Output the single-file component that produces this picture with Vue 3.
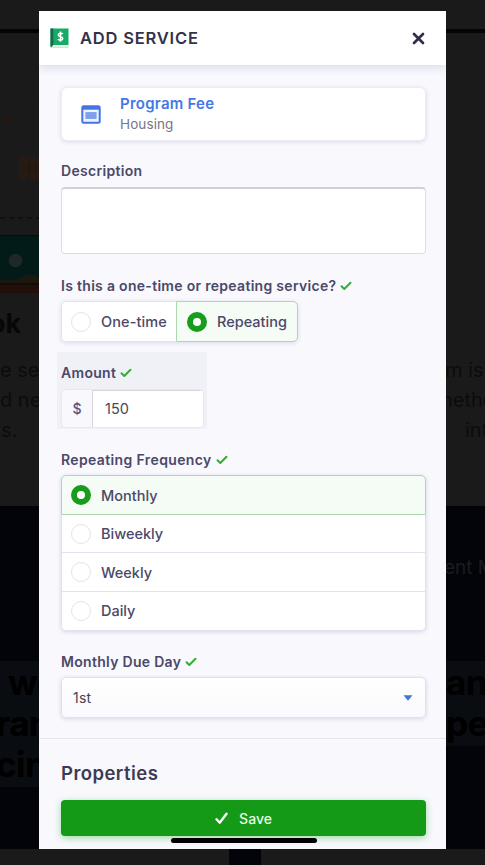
<script setup>
import { ref } from 'vue'

const kind = ref('Repeating')
const frequency = ref('Monthly')
const kinds = ['One-time', 'Repeating']
const frequencies = ['Monthly', 'Biweekly', 'Weekly', 'Daily']
</script>

<template>
  <div class="screen">
    <div class="page">
      <div class="topbar"></div>
      <div class="band intro">
        <div class="side left">
          <svg class="art" width="39" height="210" viewBox="0 0 39 210">
            <path d="M0 11H39" stroke="#1e1e1e" stroke-dasharray="4 4" />
            <path d="M7 29Q22 31 39 34" fill="none" stroke="#231a17" />
            <circle cx="7" cy="29" r="2.800" fill="#2c1612" />
            <rect x="19" y="67" width="20" height="23" fill="#261a12" />
            <path d="M20 78H39M29 67V90" stroke="#1e1610" />
            <path d="M0 128H39" stroke="#0e0e0e" stroke-width="1.5" stroke-dasharray="5 4" />
            <rect y="145" width="39" height="48" fill="#021a18" />
            <path d="M0 145.500H39" stroke="#080b0b" />
            <path d="M0 189Q12 192 22 187T39 187V193H0Z" fill="#1b190d" />
            <circle cx="15.500" cy="170.500" r="6.800" fill="#1c2928" />
            <rect y="195" width="39" height="8" fill="#230f09" />
            <rect y="193" width="39" height="2" fill="#120c08" />
          </svg>
          <div class="word">ok</div>
          <div class="copy"><span>e se</span><span>d ne</span><span class="end">s.</span></div>
        </div>
        <div class="side right">
          <div class="copy"><span>m is</span><span class="mid">hethe</span><span class="end">int</span></div>
        </div>
      </div>
      <div class="band dark">
        <div class="side left">
          <div class="big"><span class="first">we</span><span>ran</span><span>cin</span></div>
        </div>
        <div class="side right">
          <div class="menu">ent M</div>
          <div class="big two"><span>an</span><span>pe</span></div>
        </div>
      </div>
      <div class="tiles"><div></div><div></div></div>
    </div>

    <section class="modal">
      <header class="head">
        <svg class="book" width="19" height="21" viewBox="0 0 19 21">
          <path d="M.5 .5H18.500V17H2V18.500H18.500V19.300H.5Z" fill="#17aa67" />
          <path d="M2 17.100H18.500V19H2Z" fill="#e2f1eb" />
          <path d="M.5 .5H3.300V17L1.800 18.500H.5Z" fill="#17694c" />
          <path d="M12.700 6.100C12.100 4.900 8.400 4.900 8.300 7C8.300 9.200 12.800 8.100 12.800 10.500C12.700 12.700 8.700 12.600 8 11.200M10.500 3.500V13.800" fill="none" stroke="#fff" stroke-width="1.500" />
        </svg>
        <h1>ADD SERVICE</h1>
        <svg class="close" width="13" height="13" viewBox="0 0 13 13">
          <path d="M2 2L11 11M11 2L2 11" stroke="#302d4c" stroke-width="2.700" stroke-linecap="round" />
        </svg>
      </header>

      <div class="body">
        <div class="service">
          <svg width="20" height="19" viewBox="0 0 20 19">
            <rect x="1.300" y="1.300" width="17.400" height="16.400" rx="1.500" fill="#eef3ff" stroke="#4474e6" stroke-width="2" />
            <path d="M1 1.500H19V4.700H1Z" fill="#4474e6" />
            <path d="M4.500 7.500H15.500V13.500H4.500Z" fill="#8aabf2" />
            <path d="M4.500 8H15.500M4.500 10.500H15.500M4.500 13H15.500" stroke="#7299ee" stroke-width="1.400" />
          </svg>
          <div><strong>Program Fee</strong><span>Housing</span></div>
        </div>

        <label class="label description">Description</label>
        <div class="textarea"></div>

        <div class="label question">Is this a one-time or repeating service?
          <svg class="tick" viewBox="0 0 12 10"><path d="M1.500 5.200L4.300 8L10.500 1.800" /></svg>
        </div>
        <div class="segments">
          <div v-for="item in kinds" :key="item" class="option" :class="{ selected: kind === item }" @click="kind = item">
            <i class="radio"></i><span>{{ item }}</span>
          </div>
        </div>

        <div class="amount">
          <div class="label">Amount
            <svg class="tick" viewBox="0 0 12 10"><path d="M1.500 5.200L4.300 8L10.500 1.800" /></svg>
          </div>
          <div class="money"><b>$</b><span>150</span></div>
        </div>

        <div class="label repeat">Repeating Frequency
          <svg class="tick" viewBox="0 0 12 10"><path d="M1.500 5.200L4.300 8L10.500 1.800" /></svg>
        </div>
        <div class="list">
          <div v-for="item in frequencies" :key="item" class="option" :class="{ selected: frequency === item }" @click="frequency = item">
            <i class="radio"></i><span>{{ item }}</span>
          </div>
        </div>

        <div class="label due">Monthly Due Day
          <svg class="tick" viewBox="0 0 12 10"><path d="M1.500 5.200L4.300 8L10.500 1.800" /></svg>
        </div>
        <div class="select"><span>1st</span>
          <svg width="10" height="6" viewBox="0 0 10 6"><path d="M.5.300H9.500L5 5.800Z" fill="#3c75dc" /></svg>
        </div>
      </div>

      <footer class="foot">
        <h2>Properties</h2>
        <button class="save">
          <svg width="13" height="13" viewBox="0 0 13 13"><path d="M1.500 7.300L4.700 10.700L11.500 1.800" fill="none" stroke="#fff" stroke-width="2.400" stroke-linecap="round" stroke-linejoin="round" /></svg>
          <span>Save</span>
        </button>
        <div class="home"></div>
      </footer>
    </section>
  </div>
</template>

<style>
body { background: #1a1a1a; overflow: hidden; }
</style>

<style scoped>
* { box-sizing: border-box; }
h1, h2 { margin: 0; }
.screen { position: relative; width: 485px; height: 865px; overflow: hidden; font-family: Inter, sans-serif; background: #1a1a1a; color: #4b4869; }
.page { display: flex; flex-direction: column; height: 865px; }
.topbar { height: 33px; flex: none; border-bottom: 4px solid #030406; background: #1a1a1a; }
.band { display: flex; justify-content: space-between; flex: none; }
.side { width: 39px; overflow: hidden; display: flex; flex-direction: column; white-space: nowrap; }
.intro { height: 473px; color: #070707; }
.intro .left { padding-top: 57px; }
.intro .right { padding-top: 322px; }
.art { display: block; flex: none; }
.word { height: 55px; margin-left: -11px; font-size: 27px; line-height: 48px; font-weight: 700; }
.copy { display: flex; flex-direction: column; font-size: 20px; line-height: 30px; color: #0c0c0c; }
.left .copy .end { padding-left: 1px; }
.right .copy .end { padding-left: 20px; }
.right .copy { margin-left: -1px; }
.right .copy .mid { margin-left: -4px; }
.dark { height: 343px; background: #020409; color: #000; }
.dark .left { padding-top: 155px; }
.menu { height: 155px; padding-top: 47px; font-size: 19px; line-height: 29px; color: #1a1c20; margin-left: -2px; }
.big { display: flex; flex-direction: column; padding-bottom: 3px; background: #090c11; font-size: 35px; line-height: 42px; font-weight: 700; letter-spacing: -.5px; }
.big span { height: 41px; margin-left: -4px; }
.big .first { margin-left: 8px; }
.two span { margin-left: 0; }
.tiles { display: grid; grid-template-columns: 229px 224px; gap: 32px; flex: 1; background: #020409; }
.tiles div { background: #1a1a1a; }

.modal { position: absolute; left: 39px; top: 11px; width: 407px; height: 838px; background: #f8f8fd; display: flex; flex-direction: column; overflow: hidden; }
.head { height: 54px; flex: none; display: flex; align-items: center; padding: 0 21px 0 12px; background: #fff; box-shadow: 0 1px 10px #cdd2e4; }
.book { margin-left: -1px; }
h1 { margin-left: 11px; font-size: 16.500px; line-height: 22px; font-weight: 600; letter-spacing: .8px; color: #34314b; }
.close { margin-left: auto; }
.body { height: 674px; flex: none; padding: 22px 20px 0 22px; border-bottom: 1px solid #e5e7f0; }
.service { height: 54px; display: flex; align-items: center; padding-left: 19px; border: 1px solid #ececf4; border-radius: 6px; background: #fff; box-shadow: 0 1px 4px #d8d8e6; }
.service > div { margin-left: 19px; display: flex; flex-direction: column; }
.service strong { font-size: 15px; line-height: 21px; font-weight: 600; letter-spacing: .25px; color: #4477e7; }
.service span { font-size: 13.500px; line-height: 21px; letter-spacing: .1px; color: #777684; }
.label { height: 20px; display: flex; align-items: center; font-size: 14px; line-height: 20px; font-weight: 600; letter-spacing: .3px; white-space: nowrap; }
.tick { width: 12px; height: 10px; margin-left: 4px; fill: none; stroke: #35ad38; stroke-width: 2; stroke-linecap: round; stroke-linejoin: round; }
.description { margin-top: 20px; }
.textarea { height: 67px; margin-top: 6px; border: 1px solid #dedde7; border-top: 2px solid #d1d0d6; border-radius: 4px; background: #fff; }
.question { margin-top: 22px; }
.segments { width: 237px; height: 41px; margin-top: 5px; display: grid; grid-template-columns: 115px 122px; border-radius: 5px; box-shadow: 0 1px 4px #d8dae7; }
.option { display: flex; align-items: center; padding-left: 9px; background: #fff; font-size: 14.500px; font-weight: 500; }
.radio { width: 20px; height: 20px; flex: none; margin-right: 10px; border: 1.500px solid #e4e3ea; border-radius: 50%; background: #fff; }
.selected { background: #f5fcf5; }
.selected .radio { border: 6px solid #189c1c; }
.segments .option { border: 1px solid #e3e3ed; border-right: 0; border-radius: 5px 0 0 5px; padding-left: 9px; letter-spacing: .1px; }
.segments .selected { border: 1px solid #abd8ae; border-radius: 0 5px 5px 0; padding-left: 10px; letter-spacing: 0; }
.amount { width: 150px; height: 77px; margin: 10px 0 0 -4px; padding: 11px 4px 0; background: #f0f1f6; }
.money { width: 143px; height: 39px; margin-top: 6px; display: flex; align-items: center; border: 1px solid #e8e8ef; border-radius: 5px; background: #f8f8fd; overflow: hidden; }
.money b { width: 30px; text-align: center; font-size: 14px; font-weight: 500; color: #5c5383; }
.money span { flex: 1; height: 37px; padding-left: 12px; line-height: 37px; border-left: 1px solid #d6d5de; box-shadow: inset 0 1px #d6d5dc; background: #fff; font-size: 14.500px; color: #494754; }
.repeat { margin-top: 21px; letter-spacing: .37px; }
.list { height: 156px; margin-top: 5px; display: grid; grid-template-rows: 40px 38px 39px 39px; border-radius: 5px; box-shadow: 0 1px 4px #d4d6e6; }
.list .option { border: 1px solid #e2e2ed; border-top: 0; }
.list .selected { border: 1px solid #abd8ae; border-radius: 5px 5px 0 0; }
.list .option:last-child { border-radius: 0 0 5px 5px; padding-bottom: 1px; }
.due { margin-top: 21px; }
.select { height: 41px; margin-top: 5px; display: flex; align-items: center; justify-content: space-between; padding: 0 12px 0 11px; border: 1px solid #dee1ed; border-radius: 5px; background: linear-gradient(#fff, #fafafe); box-shadow: 0 1px 4px #d3d7e5; font-size: 14px; letter-spacing: .2px; color: #45434f; }
.foot { flex: 1; padding: 22px 20px 0 22px; display: flex; flex-direction: column; }
h2 { font-size: 18.500px; line-height: 24px; font-weight: 600; letter-spacing: .45px; color: #3d3a55; }
.save { height: 36px; flex: none; margin-top: 15px; display: flex; align-items: center; justify-content: center; gap: 11px; border: 0; border-radius: 4px; background: #149a17; color: #e8fbe8; font: 500 14px Inter, sans-serif; box-shadow: 0 2px 7px #9dd9a3; }
.home { width: 146px; height: 5px; flex: none; margin: 2px auto 0; border-radius: 3px; background: #000; }
</style>
